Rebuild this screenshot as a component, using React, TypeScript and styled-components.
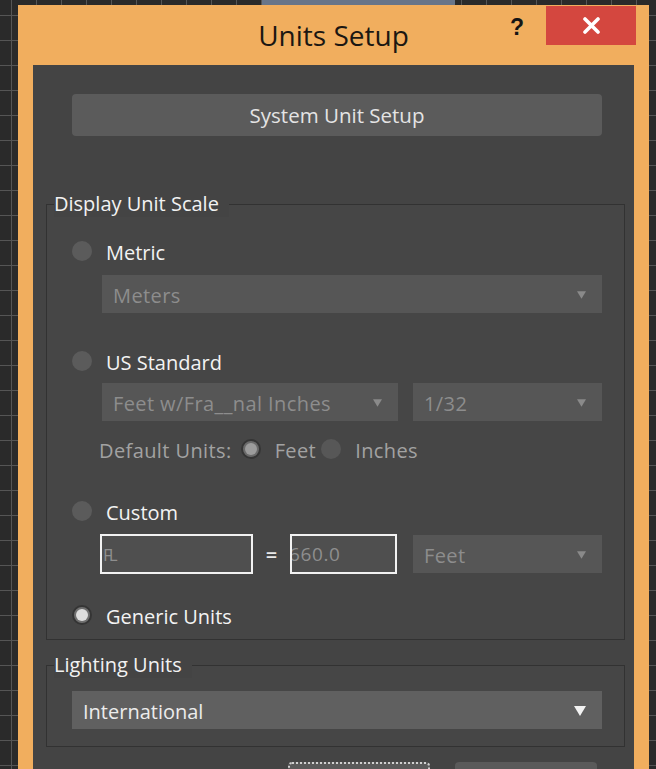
import React from "react";
import styled, { createGlobalStyle } from "styled-components";

const Global = createGlobalStyle`
  html, body { margin: 0; padding: 0; }
  body {
    width: 656px;
    height: 769px;
    overflow: hidden;
    font-family: "Open Sans", "Noto Sans", sans-serif;
    background-color: #2a2a2a;
    background-image:
      linear-gradient(#687589, #687589),
      linear-gradient(to right, #555 1px, transparent 1px),
      linear-gradient(to bottom, #555 1px, transparent 1px);
    background-repeat: no-repeat, repeat, repeat;
    background-size: 193px 5px, 25px 25px, 25px 25px;
    background-position: 262px 0, 11px 0, 0 15px;
  }
`;

const Window = styled.div`
  margin: 5px 0 0 18px;
  width: 631px;
  background: #f1ae5e;
  display: flex;
  flex-direction: column;
`;

const TitleBar = styled.div`
  height: 60px;
  display: grid;
  grid-template-columns: 1fr auto 1fr;
`;

const Title = styled.div`
  grid-column: 2;
  align-self: center;
  font-size: 28px;
  color: #1b1712;
  line-height: 1;
`;

const TitleControls = styled.div`
  grid-column: 3;
  display: flex;
  justify-content: flex-end;
  align-items: flex-start;
  padding: 1px 13px 0 0;
`;

const Help = styled.div`
  width: 24px;
  margin: 8px 17px 0 0;
  text-align: center;
  font-family: "Liberation Sans", Arial, sans-serif;
  font-weight: 700;
  font-size: 23px;
  line-height: 26px;
  color: #151515;
`;

const Close = styled.div`
  width: 90px;
  height: 39px;
  background: #d4473f;
  display: flex;
  align-items: center;
  justify-content: center;
`;

const Panel = styled.div`
  margin: 0 15px;
  background: #444444;
  padding: 29px 9px 0 13px;
  display: flex;
  flex-direction: column;
`;

const BigButton = styled.div`
  margin: 0 23px 0 26px;
  height: 42px;
  border-radius: 4px;
  background: #5b5b5b;
  color: #e4e4e4;
  font-size: 20.5px;
  display: flex;
  align-items: center;
  justify-content: center;
`;

const Group = styled.fieldset<{ $mt: number; $pad: string }>`
  margin: ${(p) => p.$mt}px 0 0 0;
  padding: ${(p) => p.$pad};
  border: 1px solid #323232;
  background: #464646;
  min-width: 0;
  display: flex;
  flex-direction: column;
`;

const Legend = styled.legend`
  margin-left: -18px;
  padding: 0 10px 0 0;
  font-size: 20px;
  line-height: 26px;
  color: #f2f2f2;
  background: #444444;
`;

const RadioRow = styled.div<{ $mt?: number }>`
  height: 28px;
  margin-top: ${(p) => p.$mt ?? 0}px;
  display: flex;
  align-items: center;
  gap: 14px;
`;

const Radio = styled.span<{ $on?: boolean; $dim?: boolean }>`
  flex: none;
  width: 20px;
  height: 20px;
  border-radius: 50%;
  box-sizing: border-box;
  display: flex;
  align-items: center;
  justify-content: center;
  background: ${(p) => (p.$on ? (p.$dim ? "#6a6a6a" : "#707070") : p.$dim ? "#575757" : "#5b5b5b")};
  border: ${(p) => (p.$on ? "2px solid #353535" : "none")};
  &::after {
    content: "";
    display: ${(p) => (p.$on ? "block" : "none")};
    width: 12px;
    height: 12px;
    border-radius: 50%;
    background: ${(p) => (p.$dim ? "#9c9c9c" : "#dedede")};
  }
`;

const Label = styled.span<{ $dim?: boolean }>`
  font-size: 20px;
  line-height: 1;
  padding-top: 3px;
  color: ${(p) => (p.$dim ? "#a2a2a2" : "#f3f3f3")};
  letter-spacing: ${(p) => (p.$dim ? "0.4px" : "0")};
  white-space: nowrap;
`;

const Select = styled.div<{ $on?: boolean; $w?: number }>`
  height: 38px;
  box-sizing: border-box;
  ${(p) => (p.$w ? `width: ${p.$w}px;` : "width: 100%;")}
  flex: ${(p) => (p.$w ? "none" : "1 1 auto")};
  min-width: 0;
  background: ${(p) => (p.$on ? "#606060" : "#565656")};
  color: ${(p) => (p.$on ? "#ececec" : "#8d8d8d")};
  font-size: 20px;
  letter-spacing: ${(p) => (p.$on ? "0" : "0.4px")};
  padding: 2px 16px 0 11px;
  display: flex;
  align-items: center;
  justify-content: space-between;
  white-space: nowrap;
`;

const Indent = styled.div<{ $ml: number; $mt: number }>`
  margin: ${(p) => p.$mt}px 0 0 ${(p) => p.$ml}px;
  display: flex;
  align-items: center;
`;

const PairRow = styled.div`
  margin: 8px 0 0 30px;
  display: flex;
  gap: 15px;
`;

const DefaultRow = styled.div`
  margin: 14px 0 0 27px;
  height: 28px;
  display: flex;
  align-items: center;
`;

const Gap = styled.span<{ $w: number }>`
  flex: none;
  width: ${(p) => p.$w}px;
`;

const TextBox = styled.div<{ $w: number }>`
  width: ${(p) => p.$w}px;
  height: 40px;
  flex: none;
  box-sizing: border-box;
  border: 2px solid #f2f2f2;
  background: #4f4f4f;
  color: #8e8e8e;
  font-size: 19px;
  padding-left: 1px;
  display: flex;
  align-items: center;
  overflow: hidden;
  white-space: nowrap;
`;

const Clip = styled.span`
  margin-left: -4px;
  letter-spacing: 0.6px;
`;

const Small = styled.span`
  font-size: 17px;
  letter-spacing: -3px;
`;

const Equals = styled.span`
  width: 37px;
  flex: none;
  text-align: center;
  color: #e8e8e8;
  font-size: 20px;
  font-weight: 600;
`;

const BottomRow = styled.div`
  margin: 15px 0 0 242px;
  display: flex;
  gap: 25px;
`;

const DlgButton = styled.div<{ $focus?: boolean }>`
  width: 142px;
  height: 40px;
  border-radius: 4px;
  box-sizing: border-box;
  background: #5a5a5a;
  border: ${(p) => (p.$focus ? "2px dotted #d0d0d0" : "none")};
`;

const Arrow = ({ on }: { on?: boolean }) => (
  <svg width={on ? 12 : 9} height={on ? 10 : 8} viewBox="0 0 12 10">
    <path d="M0 0 H12 L6 10 Z" fill={on ? "#f2f2f2" : "#8a8a8a"} />
  </svg>
);

export default function App() {
  return (
    <>
      <Global />
      <Window>
        <TitleBar>
          <Title>Units Setup</Title>
          <TitleControls>
            <Help>?</Help>
            <Close>
              <svg width="17" height="17" viewBox="0 0 17 17">
                <path d="M2 2 L15 15 M15 2 L2 15" stroke="#fff" strokeWidth="3.6" strokeLinecap="round" />
              </svg>
            </Close>
          </TitleControls>
        </TitleBar>
        <Panel>
          <BigButton>System Unit Setup</BigButton>

          <Group $mt={55} $pad="20px 22px 10px 25px">
            <Legend>Display Unit Scale</Legend>
            <RadioRow>
              <Radio />
              <Label>Metric</Label>
            </RadioRow>
            <Indent $ml={30} $mt={10}>
              <Select>
                <span>Meters</span>
                <Arrow />
              </Select>
            </Indent>

            <RadioRow $mt={34}>
              <Radio />
              <Label>US Standard</Label>
            </RadioRow>
            <PairRow>
              <Select $w={296}>
                <span>Feet w/Fra__nal Inches</span>
                <Arrow />
              </Select>
              <Select>
                <span>1/32</span>
                <Arrow />
              </Select>
            </PairRow>
            <DefaultRow>
              <Label $dim>Default Units:</Label>
              <Gap $w={9} />
              <Radio $on $dim />
              <Gap $w={14} />
              <Label $dim>Feet</Label>
              <Gap $w={5} />
              <Radio $dim />
              <Gap $w={14} />
              <Label $dim>Inches</Label>
            </DefaultRow>

            <RadioRow $mt={34}>
              <Radio />
              <Label>Custom</Label>
            </RadioRow>
            <Indent $ml={28} $mt={9}>
              <TextBox $w={153}>
                <Small>FL</Small>
              </TextBox>
              <Equals>=</Equals>
              <TextBox $w={107}>
                <Clip>660.0</Clip>
              </TextBox>
              <Gap $w={16} />
              <Select>
                <span>Feet</span>
                <Arrow />
              </Select>
            </Indent>

            <RadioRow $mt={27}>
              <Radio $on />
              <Label>Generic Units</Label>
            </RadioRow>
          </Group>

          <Group $mt={12} $pad="13px 22px 17px 25px">
            <Legend>Lighting Units</Legend>
            <Indent $ml={0} $mt={0}>
              <Select $on>
                <span>International</span>
                <Arrow on />
              </Select>
            </Indent>
          </Group>

          <BottomRow>
            <DlgButton $focus aria-label="OK" />
            <DlgButton aria-label="Cancel" />
          </BottomRow>
        </Panel>
      </Window>
    </>
  );
}
